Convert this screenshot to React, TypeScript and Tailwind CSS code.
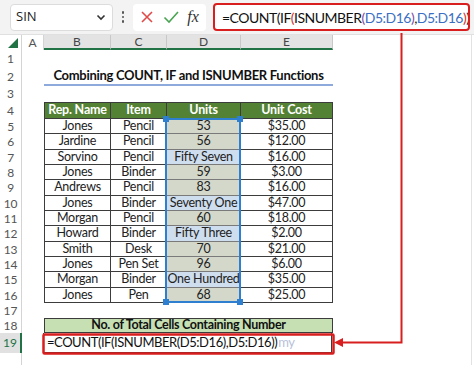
import React from "react";

const W = { rh: 22, A: 22, B: 67, C: 56, D: 74, E: 92 };

const data: [string, string, string, string, boolean][] = [
  ["Jones", "Pencil", "53", "$35.00", true],
  ["Jardine", "Pencil", "56", "$12.00", true],
  ["Sorvino", "Pencil", "Fifty Seven", "$16.00", false],
  ["Jones", "Binder", "59", "$3.00", true],
  ["Andrews", "Pencil", "83", "$16.00", true],
  ["Jones", "Binder", "Seventy One", "$47.00", false],
  ["Morgan", "Pencil", "60", "$18.00", true],
  ["Howard", "Binder", "Fifty Three", "$2.00", false],
  ["Smith", "Desk", "70", "$21.00", true],
  ["Jones", "Pen Set", "96", "$6.00", true],
  ["Morgan", "Binder", "One Hundred", "$35.00", false],
  ["Jones", "Pen", "68", "$25.00", true],
];

const heights = [15, 16, 15, 15, 16, 15, 15, 16, 15, 15, 16, 15];

function RowHead({ n, h, sel }: { n?: number; h: number; sel?: boolean }) {
  return (
    <div
      className={
        "shrink-0 flex items-center justify-center text-[12px] text-[#555] border-r " +
        (sel ? "bg-[#e1e1e1] border-r-2 border-[#217346] text-[#217346]" : "bg-white border-[#d4d4d4]")
      }
      style={{ width: W.rh, height: h }}
    >
      {n}
    </div>
  );
}

function Empty({ h, n }: { h: number; n?: number }) {
  return (
    <div className="flex" style={{ height: h }}>
      <RowHead n={n} h={h} />
    </div>
  );
}

export default function App() {
  return (
    <div className="relative w-[474px] h-[365px] overflow-hidden bg-white font-['Lato',sans-serif] text-[#222]">
      {/* top bar */}
      <div className="h-[35px] bg-[#f3f3f3] flex items-center pl-[10px] border-b border-[#e0e0e0]">
        <div className="w-[103px] h-[27px] bg-white rounded-[4px] border border-[#dcdcdc] flex items-center justify-between pl-[5px] pr-[6px]">
          <span className="text-[13px] text-[#222] font-['Open_Sans',sans-serif]">SIN</span>
          <svg width="10" height="10" viewBox="0 0 10 10">
            <path d="M1.5 3.5 L5 7 L8.5 3.5" stroke="#333" strokeWidth="1.6" fill="none" />
          </svg>
        </div>
        <div className="w-[20px] flex flex-col items-center gap-[2px]">
          <div className="w-[2.5px] h-[2.5px] bg-[#555] rounded-full" />
          <div className="w-[2.5px] h-[2.5px] bg-[#555] rounded-full" />
          <div className="w-[2.5px] h-[2.5px] bg-[#555] rounded-full" />
        </div>
        <div className="w-[73px] h-[27px] bg-white rounded-[4px] flex items-center justify-around px-[3px]">
          <svg width="14" height="14" viewBox="0 0 14 14">
            <path d="M2 2 L12 12 M12 2 L2 12" stroke="#e04a4a" strokeWidth="1.6" fill="none" />
          </svg>
          <svg width="16" height="14" viewBox="0 0 16 14">
            <path d="M1.5 7.5 L6 12 L15 2" stroke="#4aa552" strokeWidth="1.6" fill="none" />
          </svg>
          <span className="font-['Liberation_Serif',serif] italic text-[16px] text-[#333] leading-none">
            <i>f</i>x
          </span>
        </div>
        <div className="ml-[7px] w-[257px] h-[28px] bg-white rounded-[4px] border-2 border-[#d81e1e] flex items-center pl-[7px] text-[14px] tracking-[-0.5px] whitespace-nowrap overflow-hidden text-[#111]">
          <span>=COUNT(IF</span>
          <span className="text-[#d0312d]">(</span>
          <span>ISNUMBER</span>
          <span className="text-[#7c4ba8]">(</span>
          <span className="text-[#3b6fc4]">D5:D16</span>
          <span className="text-[#7c4ba8]">)</span>
          <span>,</span>
          <span className="text-[#3b6fc4]">D5:D16</span>
          <span className="text-[#d0312d]">)</span>
          <span>)</span>
        </div>
      </div>

      {/* column headers */}
      <div className="flex h-[15px] text-[12px] text-[#555]">
        <div className="shrink-0 bg-white border-r border-[#d4d4d4] flex items-end justify-end pr-[3px] pb-[2px]" style={{ width: W.rh }}>
          <svg width="10" height="10" viewBox="0 0 10 10">
            <path d="M10 0 L10 10 L0 10 Z" fill="#217346" />
          </svg>
        </div>
        <div className="shrink-0 flex items-center justify-center bg-white border-r border-[#d4d4d4]" style={{ width: W.A }}>A</div>
        {(["B", "C", "D", "E"] as const).map((c) => (
          <div key={c} className="shrink-0 flex items-center justify-center bg-[#e3e3e3] border-r border-[#c8c8c8] border-b-2 border-b-[#217346] text-[#444]" style={{ width: W[c] }}>
            {c}
          </div>
        ))}
        <div className="flex-1 bg-white" />
      </div>

      {/* rows */}
      <div className="relative">
        <Empty n={1} h={18} />
        <div className="flex h-[18px]">
          <RowHead n={2} h={18} />
          <div className="shrink-0" style={{ width: W.A }} />
          <div className="w-[289px] border-b-2 border-[#8ea9db] flex items-center justify-center font-bold text-[13px] tracking-[-0.3px] whitespace-nowrap text-[#111]">
            Combining COUNT, IF and ISNUMBER Functions
          </div>
        </div>
        <Empty n={3} h={16} />
        {/* table header */}
        <div className="flex h-[17px]">
          <RowHead n={4} h={17} />
          <div className="shrink-0" style={{ width: W.A }} />
          {[
            ["Rep. Name", W.B],
            ["Item", W.C],
            ["Units", W.D],
            ["Unit Cost", W.E],
          ].map(([t, w], i) => (
            <div
              key={i}
              className={"shrink-0 bg-[#548235] text-white font-bold text-[12.5px] tracking-[-0.2px] flex items-center justify-center border-t border-b border-r border-[#3c3c3c] " + (i === 0 ? "border-l" : "")}
              style={{ width: w as number }}
            >
              {t}
            </div>
          ))}
        </div>
        {data.map(([name, item, units, cost, num], i) => {
          const h = heights[i];
          return (
            <div key={i} className="flex text-[12.5px] tracking-[-0.25px]" style={{ height: h }}>
              <RowHead n={5 + i} h={h} />
              <div className="shrink-0" style={{ width: W.A }} />
              <div className="shrink-0 flex items-center justify-center border-l border-r border-b border-[#3c3c3c]" style={{ width: W.B }}>{name}</div>
              <div className="shrink-0 flex items-center justify-center border-r border-b border-[#3c3c3c]" style={{ width: W.C }}>{item}</div>
              <div className={"shrink-0 flex items-center justify-center border-r border-b border-[#7a7a7a] whitespace-nowrap " + (num ? "bg-[#d3d8cb]" : "bg-[#cfdeee]")} style={{ width: W.D }}>{units}</div>
              <div className="shrink-0 flex items-center justify-center border-r border-b border-[#3c3c3c]" style={{ width: W.E }}>{cost}</div>
            </div>
          );
        })}
        <Empty n={17} h={15} />
        <div className="flex h-[15px]">
          <RowHead n={18} h={15} />
          <div className="shrink-0" style={{ width: W.A }} />
          <div className="w-[289px] bg-[#c6e0b4] border border-[#3c3c3c] flex items-center justify-center font-bold text-[12.5px] tracking-[-0.3px] whitespace-nowrap text-[#111]">
            No. of Total Cells Containing Number
          </div>
        </div>
        <div className="flex h-[20px]">
          <RowHead n={19} h={20} sel />
          <div className="shrink-0" style={{ width: W.A - 1 }} />
          <div className="w-[289px] border-x border-b border-[#3c3c3c] flex items-center pl-[3px] text-[13px] tracking-[-0.45px] whitespace-nowrap text-[#111]">
            =COUNT(IF(ISNUMBER(D5:D16),D5:D16))
            <span className="ml-[1px] text-[#b8bfd8]">my</span>
          </div>
        </div>
        <Empty h={14} />

        {/* selection on D5:D16 */}
        <div className="absolute border-2 border-[#2f7fd0] pointer-events-none" style={{ left: 21 + W.A + W.B + W.C - 1, top: 18 + 18 + 16 + 17 - 1, width: W.D + 2, height: 184 + 1 }}>
          <div className="absolute -left-[4px] -top-[4px] w-[6px] h-[6px] bg-[#2f7fd0]" />
          <div className="absolute -right-[4px] -top-[4px] w-[6px] h-[6px] bg-[#2f7fd0]" />
          <div className="absolute -left-[4px] -bottom-[4px] w-[6px] h-[6px] bg-[#2f7fd0]" />
          <div className="absolute -right-[4px] -bottom-[4px] w-[6px] h-[6px] bg-[#2f7fd0]" />
        </div>
      </div>

      {/* right edge line */}
      <div className="absolute left-[471px] top-[35px] bottom-0 w-px bg-[#e2e2e2]" />

      {/* red annotation overlay */}
      <svg className="absolute left-0 top-0 pointer-events-none" width="474" height="365">
        <rect x="43.5" y="334.5" width="290" height="19" fill="none" stroke="#d81e1e" strokeWidth="2.5" rx="1" />
        <path d="M401.5 33 L401.5 342.5 L340 342.5" stroke="#d81e1e" strokeWidth="2" fill="none" />
        <path d="M334 342.5 L343 338 L343 347 Z" fill="#d81e1e" />
      </svg>
    </div>
  );
}
